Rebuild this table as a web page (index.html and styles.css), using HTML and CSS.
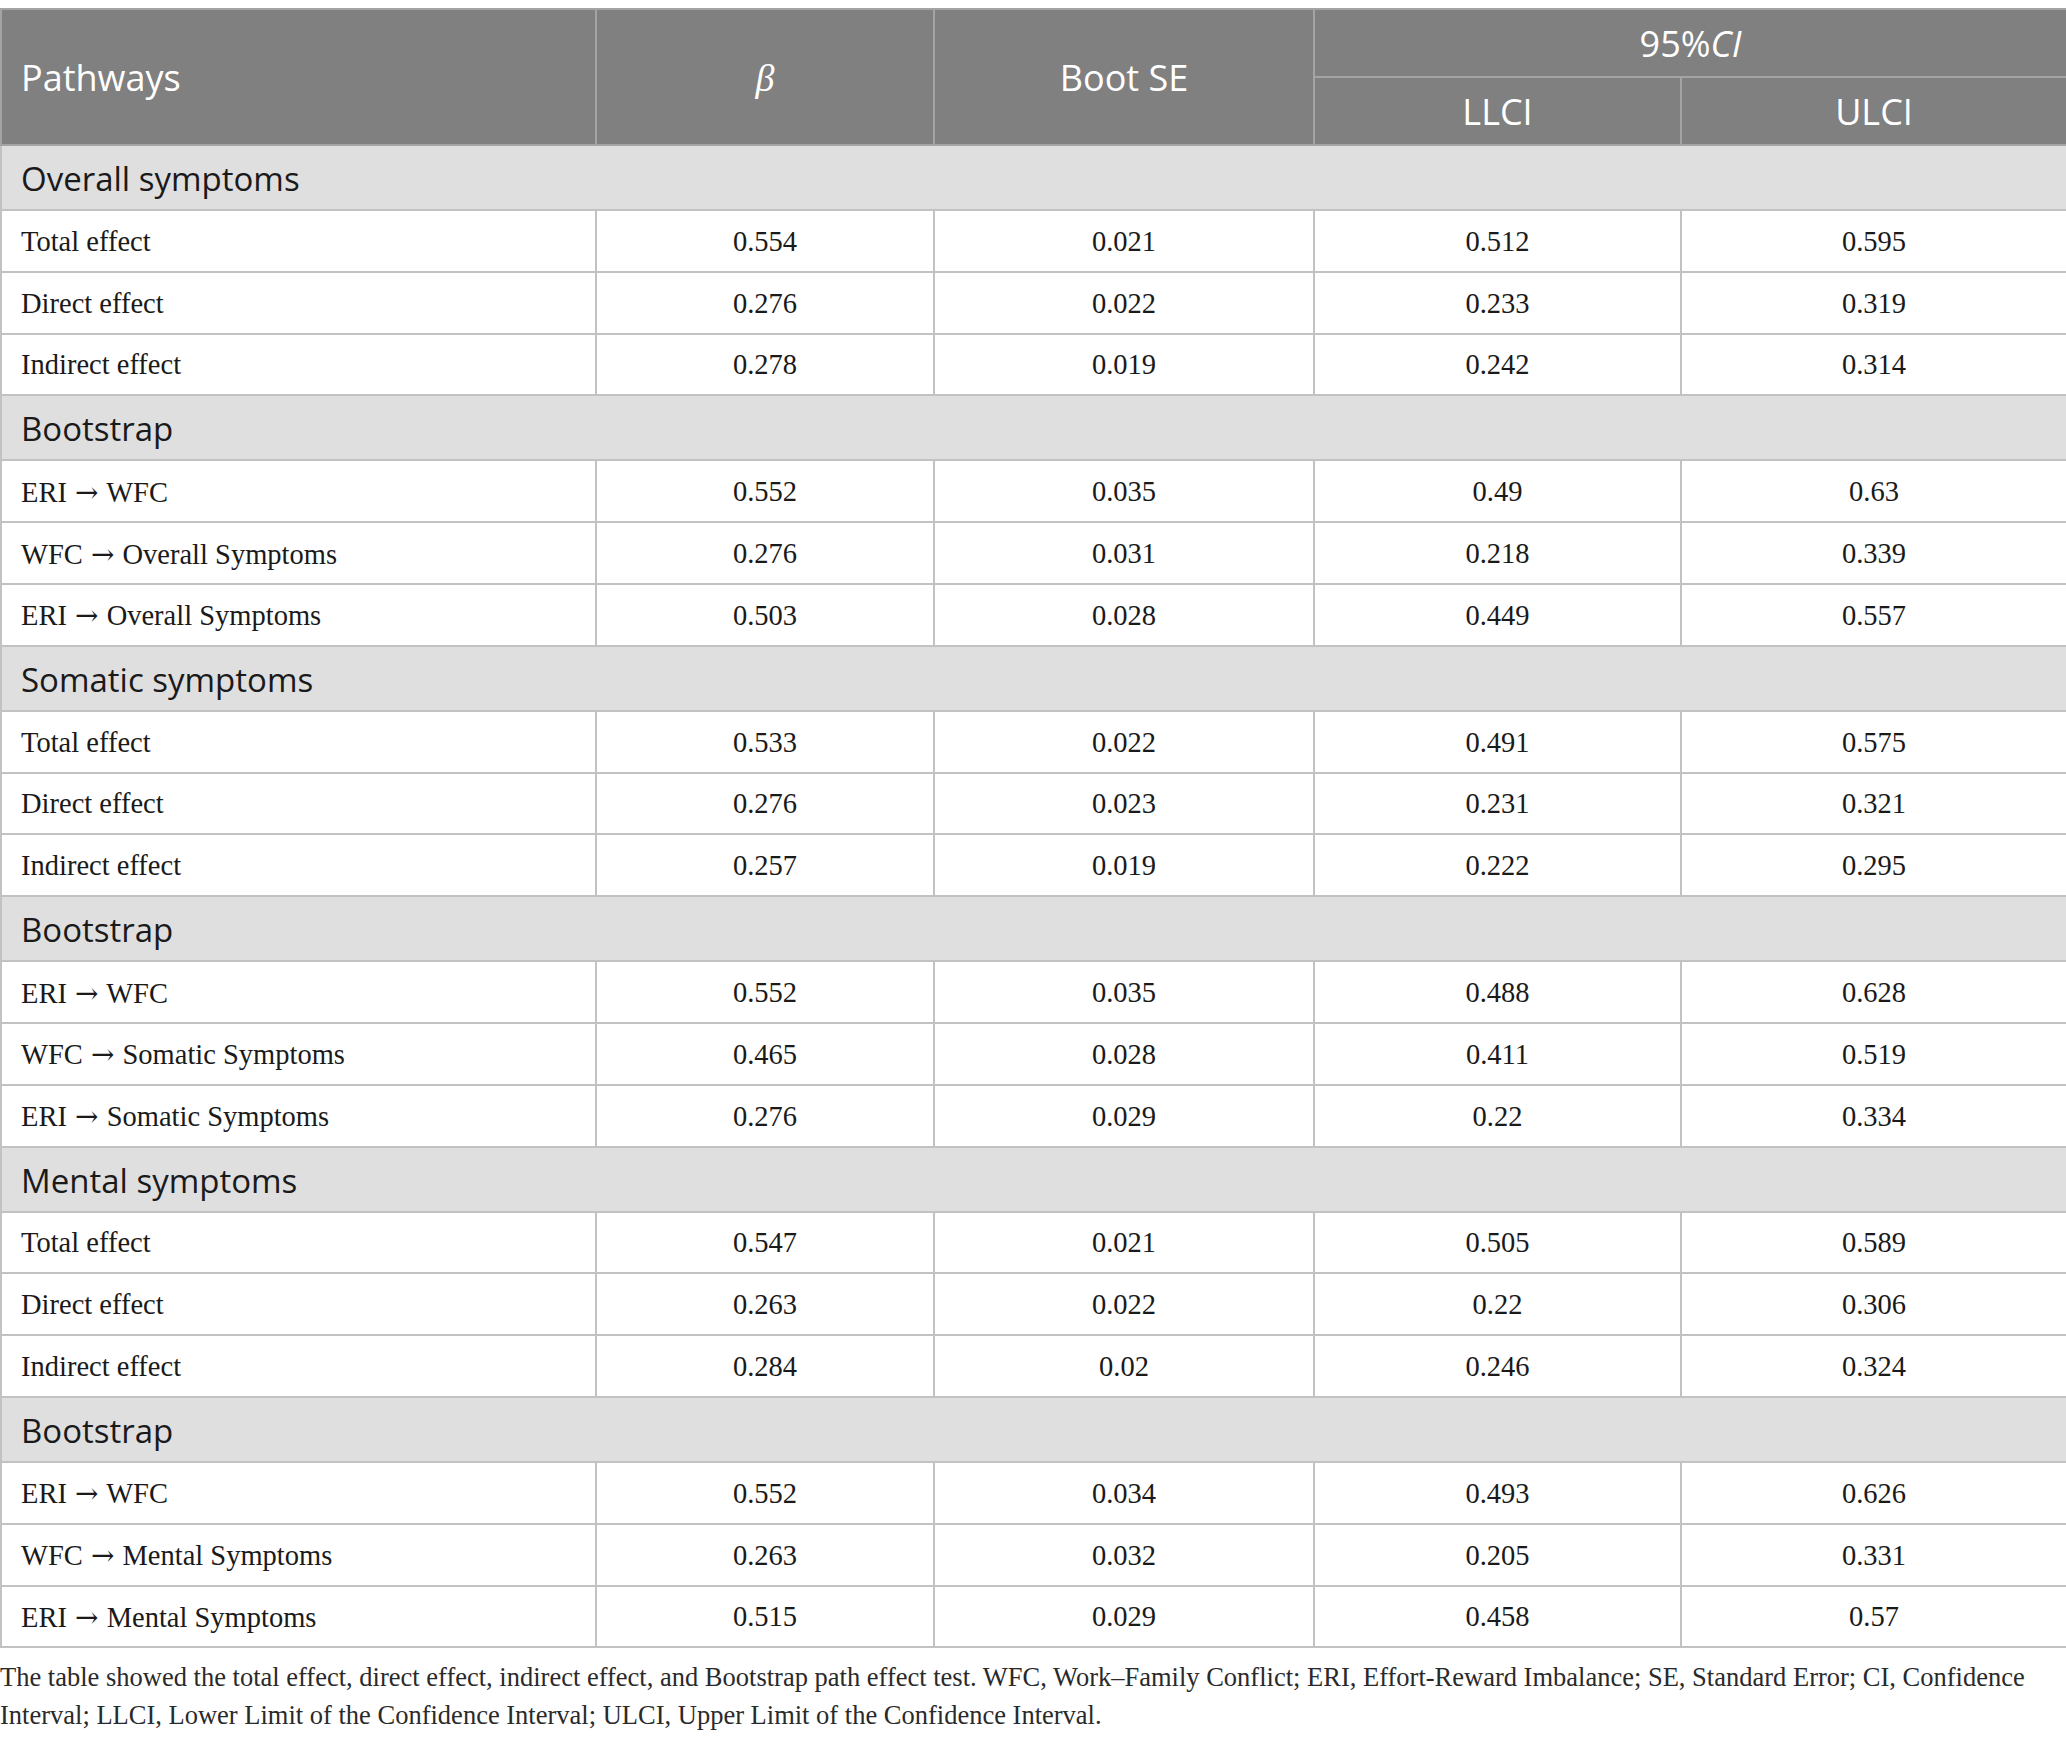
FILE: index.html
```html
<!DOCTYPE html>
<html lang="en">
<head>
    <meta charset="UTF-8">
    <meta name="viewport" content="width=device-width, initial-scale=1.0">
    <title>Pathway effect test</title>
    <link rel="stylesheet" href="styles.css">
</head>
<body>
    <div class="table-wrap">
        <table class="effects">
            <colgroup>
                <col class="col-path">
                <col class="col-beta">
                <col class="col-se">
                <col class="col-llci">
                <col class="col-ulci">
            </colgroup>
            <thead>
                <tr>
                    <th rowspan="2" class="left">Pathways</th>
                    <th rowspan="2"><i class="greek">β</i></th>
                    <th rowspan="2">Boot SE</th>
                    <th colspan="2">95%<i>CI</i></th>
                </tr>
                <tr>
                    <th>LLCI</th>
                    <th>ULCI</th>
                </tr>
            </thead>
            <tbody>
                <tr class="section"><td colspan="5">Overall symptoms</td></tr>
                <tr><td>Total effect</td><td>0.554</td><td>0.021</td><td>0.512</td><td>0.595</td></tr>
                <tr><td>Direct effect</td><td>0.276</td><td>0.022</td><td>0.233</td><td>0.319</td></tr>
                <tr><td>Indirect effect</td><td>0.278</td><td>0.019</td><td>0.242</td><td>0.314</td></tr>
                <tr class="section"><td colspan="5">Bootstrap</td></tr>
                <tr><td>ERI <span class="arrow">→</span> WFC</td><td>0.552</td><td>0.035</td><td>0.49</td><td>0.63</td></tr>
                <tr><td>WFC <span class="arrow">→</span> Overall Symptoms</td><td>0.276</td><td>0.031</td><td>0.218</td><td>0.339</td></tr>
                <tr><td>ERI <span class="arrow">→</span> Overall Symptoms</td><td>0.503</td><td>0.028</td><td>0.449</td><td>0.557</td></tr>
                <tr class="section"><td colspan="5">Somatic symptoms</td></tr>
                <tr><td>Total effect</td><td>0.533</td><td>0.022</td><td>0.491</td><td>0.575</td></tr>
                <tr><td>Direct effect</td><td>0.276</td><td>0.023</td><td>0.231</td><td>0.321</td></tr>
                <tr><td>Indirect effect</td><td>0.257</td><td>0.019</td><td>0.222</td><td>0.295</td></tr>
                <tr class="section"><td colspan="5">Bootstrap</td></tr>
                <tr><td>ERI <span class="arrow">→</span> WFC</td><td>0.552</td><td>0.035</td><td>0.488</td><td>0.628</td></tr>
                <tr><td>WFC <span class="arrow">→</span> Somatic Symptoms</td><td>0.465</td><td>0.028</td><td>0.411</td><td>0.519</td></tr>
                <tr><td>ERI <span class="arrow">→</span> Somatic Symptoms</td><td>0.276</td><td>0.029</td><td>0.22</td><td>0.334</td></tr>
                <tr class="section"><td colspan="5">Mental symptoms</td></tr>
                <tr><td>Total effect</td><td>0.547</td><td>0.021</td><td>0.505</td><td>0.589</td></tr>
                <tr><td>Direct effect</td><td>0.263</td><td>0.022</td><td>0.22</td><td>0.306</td></tr>
                <tr><td>Indirect effect</td><td>0.284</td><td>0.02</td><td>0.246</td><td>0.324</td></tr>
                <tr class="section"><td colspan="5">Bootstrap</td></tr>
                <tr><td>ERI <span class="arrow">→</span> WFC</td><td>0.552</td><td>0.034</td><td>0.493</td><td>0.626</td></tr>
                <tr><td>WFC <span class="arrow">→</span> Mental Symptoms</td><td>0.263</td><td>0.032</td><td>0.205</td><td>0.331</td></tr>
                <tr><td>ERI <span class="arrow">→</span> Mental Symptoms</td><td>0.515</td><td>0.029</td><td>0.458</td><td>0.57</td></tr>
            </tbody>
        </table>
        <p class="caption">The table showed the total effect, direct effect, indirect effect, and Bootstrap path effect test. WFC, Work–Family Conflict; ERI, Effort-Reward Imbalance; SE, Standard Error; CI, Confidence Interval; LLCI, Lower Limit of the Confidence Interval; ULCI, Upper Limit of the Confidence Interval.</p>
    </div>
</body>
</html>
```

FILE: styles.css
```css
body {
    margin: 0;
    padding: 0;
    background-color: #fff;
    color: #1a1a1a;
}
.table-wrap {
    padding-top: 8px;
    width: 2066px;
}
.effects {
    width: 2066px;
    border-collapse: collapse;
    table-layout: fixed;
    font-family: "Liberation Serif", "Times New Roman", serif;
    font-size: 28.5px;
}
.col-path { width: 595px; }
.col-beta { width: 338px; }
.col-se { width: 380px; }
.col-llci { width: 367px; }
.col-ulci { width: 386px; }

.effects thead th {
    background-color: #7f807f;
    color: #fff;
    font-family: "Open Sans", "Noto Sans", sans-serif;
    font-weight: 400;
    font-size: 36px;
    height: 66px;
    padding: 0;
    border: 2px solid #a3a4a3;
    text-align: center;
    vertical-align: middle;
}
.effects thead th.left {
    text-align: left;
    padding-left: 19px;
}
.effects thead i {
    font-style: italic;
}
.effects thead .greek {
    font-family: "Liberation Serif", serif;
    font-size: 38px;
}
.effects td {
    border: 2px solid #c2c2c2;
    height: 57.8px;
    padding: 2px 0 0;
    text-align: center;
    vertical-align: middle;
}
.effects td:first-child {
    text-align: left;
    padding-left: 19px;
}
.arrow {
    font-family: "DejaVu Serif", serif;
    font-size: 28px;
    padding: 0 1px;
}
.effects tr.section td {
    background-color: #e0dfe0;
    font-family: "Open Sans", "Noto Sans", sans-serif;
    font-size: 33px;
    height: 61px;
}
.caption {
    margin: 10px 0 0;
    font-family: "Liberation Serif", "Times New Roman", serif;
    font-size: 26.5px;
    line-height: 38px;
    color: #2a2a2a;
}
```
